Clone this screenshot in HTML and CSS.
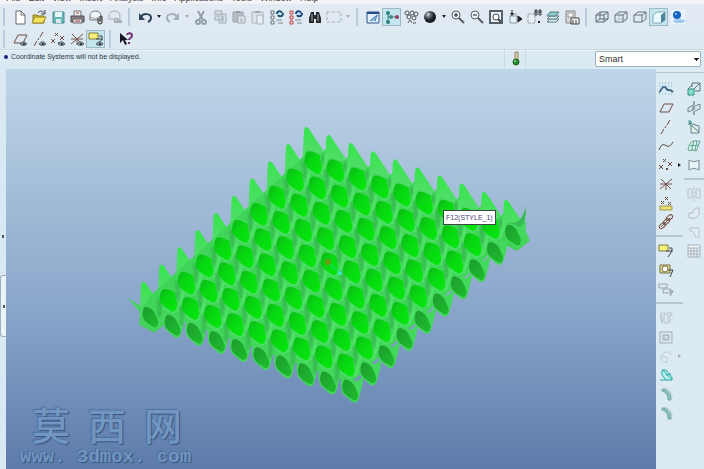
FILE: index.html
```html
<!DOCTYPE html>
<html lang="en">
<head>
<meta charset="utf-8">
<title>Surface model</title>
<link rel="stylesheet" href="styles.css">
</head>
<body>
<svg class="sprite" aria-hidden="true">
  <symbol id="new" viewBox="0 0 16 16"><path d="M4 2h5l4 4v9H4z" fill="#fff" stroke="#626b70"/><path d="M9 2v4h4" fill="none" stroke="#626b70"/></symbol>
  <symbol id="open" viewBox="0 0 16 16"><path d="M2 6h4l1 1h6v7H2z" fill="#d2b72c" stroke="#8a7a28"/><path d="M1 14l3-6h11l-3 6z" fill="#f3e25a" stroke="#9b8a2c"/><path d="M7 4c2-3 5-2 6 0M14 1v4h-4" fill="none" stroke="#34424a"/></symbol>
  <symbol id="save" viewBox="0 0 16 16"><path d="M3 3h11v11H3z" fill="#63b8b5" stroke="#4c8891"/><path d="M5 3h7v5H5z" fill="#e9f6f8"/><path d="M6 10h5v4H6z" fill="#d8e8ee"/></symbol>
  <symbol id="print" viewBox="0 0 16 16"><path d="M5 7V2h7v5" fill="#eee" stroke="#777"/><path d="M2 7h13v6H2z" fill="#8b7c80" stroke="#4f4b52"/><path d="M4 10h9v4H4z" fill="#e3dfe0" stroke="#666"/><path d="M7 4h3M6 12h5" stroke="#b13b41"/></symbol>
  <symbol id="mail" viewBox="0 0 16 16"><path d="M2 7c0-4 3-5 6-5s5 2 5 5v4H2z" fill="#f2f5f7" stroke="#777"/><path d="M2 8l5 2 6-3" fill="none" stroke="#999"/><path d="M10 9v4a2 2 0 0 0 4 0V8a1 1 0 0 0-2 0v5" fill="none" stroke="#222"/></symbol>
  <symbol id="send" viewBox="0 0 16 16"><path d="M2 7c0-4 3-5 6-5s5 2 5 5v3H2z" fill="#e2e8ed" stroke="#a5afb8"/><path d="M7 11h8v3H7z" fill="#a5afb8"/><circle cx="9" cy="11" r="2" fill="#c8d0d7" stroke="#9ba6af"/></symbol>
  <symbol id="undo" viewBox="0 0 16 16"><path d="M4 8c2-4 10-4 10 1 0 2-1 3-3 4" fill="none" stroke="#2e4258" stroke-width="2"/><path d="M2 4v7h6z" fill="#2e4258"/></symbol>
  <symbol id="redo" viewBox="0 0 16 16"><path d="M12 8c-2-4-10-4-10 1 0 2 1 3 3 4" fill="none" stroke="#a3afb9" stroke-width="2"/><path d="M14 4v7H8z" fill="#a3afb9"/></symbol>
  <symbol id="cut" viewBox="0 0 16 16"><path d="M5 2l5 9M11 2l-5 9" stroke="#96a0a9" stroke-width="2"/><g fill="none" stroke="#96a0a9" stroke-width="2"><circle cx="5" cy="13" r="2"/><circle cx="11" cy="13" r="2"/></g></symbol>
  <symbol id="copy" viewBox="0 0 16 16"><path d="M3 2h7v9H3zM7 5h7v9H7z" fill="#dce5eb" stroke="#9da9b2"/><path d="M9 8h3M9 10h3M9 12h3M4 5h2M4 7h2" stroke="#9da9b2"/></symbol>
  <symbol id="paste" viewBox="0 0 16 16"><path d="M2 3h10v10H2z" fill="#b5bec5" stroke="#97a3ab"/><path d="M5 2h4v2H5z" fill="#8f9ba4"/><path d="M7 7h7v7H7z" fill="#e3eaef" stroke="#9da9b2"/><path d="M9 10h3M9 12h3" stroke="#9da9b2"/></symbol>
  <symbol id="special" viewBox="0 0 16 16"><path d="M2 3h11v11H2z" fill="#dce5eb" stroke="#aab5bd"/><path d="M5 2h5v2H5z" fill="#9ba6af"/><path d="M7 6h6v9H7z" fill="#e9eff3" stroke="#aab5bd"/></symbol>
  <symbol id="regen" viewBox="0 0 16 16"><path d="M2 2h3v3H2zM2 7h3v3H2zM2 12h3v3H2z" fill="#fff" stroke="#5c6c75"/><path d="M8 5c0-3 4-4 5-1M14 4c0 4-4 4-5 2" fill="none" stroke="#1c5379" stroke-width="2"/><path d="M7 11h6M9 14h5" stroke="#7c8a92"/></symbol>
  <symbol id="regen2" viewBox="0 0 16 16"><path d="M2 2h3v3H2zM2 7h3v3H2zM2 12h3v3H2z" fill="#fbd7d9" stroke="#b44950"/><path d="M8 5c0-3 4-4 5-1M14 4c0 4-4 4-5 2" fill="none" stroke="#1c4c85" stroke-width="2"/><path d="M7 11h6M9 14h5" stroke="#7c8a92"/></symbol>
  <symbol id="find" viewBox="0 0 16 16"><path d="M4 3h3v3h2V3h3l2 6v5H9v-4H7v4H2V9z" fill="#26292c"/><path d="M5 5v7M11 5v7" stroke="#a9b2b5"/></symbol>
  <symbol id="select" viewBox="0 0 16 16"><path d="M1 3h14v10H1z" fill="none" stroke="#a4afb5" stroke-dasharray="3 2"/></symbol>
  <symbol id="sketch" viewBox="0 0 16 16"><path d="M2 3h12v11H2z" fill="#e0effa" stroke="#2a548a"/><path d="M2 3h12v2H2z" fill="#284f84"/><path d="M5 12l7-6-2 6" fill="#8ebde0" stroke="#3c76ac"/></symbol>
  <symbol id="tree" viewBox="0 0 16 16"><path d="M4 4v9M4 8h8" stroke="#467c80"/><g fill="#268079"><circle cx="4" cy="4" r="2"/><circle cx="4" cy="13" r="2"/></g><circle cx="7" cy="8" r="2" fill="#408e82"/><circle cx="13" cy="8" r="2" fill="#963d5e"/></symbol>
  <symbol id="chain" viewBox="0 0 16 16"><g fill="#eef2f4" stroke="#4c555b"><circle cx="4" cy="4" r="2"/><circle cx="9" cy="4" r="2"/><circle cx="13" cy="5" r="2"/><circle cx="6" cy="8" r="2"/><circle cx="11" cy="9" r="2"/><path d="M5 14l2-3 2 3M10 14h3"/></g></symbol>
  <symbol id="ball" viewBox="0 0 16 16"><circle cx="8" cy="8" r="6" fill="url(#ballFill)"/></symbol>
  <symbol id="zin" viewBox="0 0 16 16"><circle cx="6" cy="6" r="4" fill="#edf4f8" stroke="#555f66"/><path d="M9 9l5 5" stroke="#555f66" stroke-width="2"/><path d="M4 6h4M6 4v4" stroke="#222"/></symbol>
  <symbol id="zout" viewBox="0 0 16 16"><circle cx="6" cy="6" r="4" fill="#edf4f8" stroke="#555f66"/><path d="M9 9l5 5" stroke="#555f66" stroke-width="2"/><path d="M4 6h4" stroke="#222"/></symbol>
  <symbol id="refit" viewBox="0 0 16 16"><path d="M2 2h12v12H2z" fill="#e5eef3" stroke="#54616b" stroke-width="2"/><circle cx="8" cy="8" r="3" fill="#fff" stroke="#444"/><path d="M10 10l3 3" stroke="#444" stroke-width="2"/></symbol>
  <symbol id="orient" viewBox="0 0 16 16"><path d="M3 7h7v7H3zM3 7l2-2h5" fill="#e8f1f5" stroke="#879ba4"/><path d="M5 1v5M11 7l4 3-4 3z" fill="#222" stroke="#222"/><path d="M3 4h4L5 7z" fill="#222"/></symbol>
  <symbol id="views" viewBox="0 0 16 16"><path d="M2 5h7v9H2z" fill="#e9f1f5" stroke="#8fa0a8" stroke-dasharray="3 1"/><path d="M9 1h2v2H9zM9 3h2v3H9zM13 1h2v2h-2zM13 3h2v3h-2z" fill="none" stroke="#343a3e"/><path d="M12 13h2" stroke="#222" stroke-width="2"/></symbol>
  <symbol id="layers" viewBox="0 0 16 16"><g fill="#e0f2f4" stroke="#567a82"><path d="M2 13l3-3h9l-3 3z"/><path d="M2 10l3-3h9l-3 3z"/><path d="M2 7l3-4h9l-3 4z" fill="#8ed0ce"/></g></symbol>
  <symbol id="manager" viewBox="0 0 16 16"><path d="M2 2h9v12H2z" fill="#d8d9d9" stroke="#888"/><path d="M4 4h5v4H4z" fill="#fff" stroke="#999"/><path d="M7 9h8v6H7z" fill="#f5f5f5" stroke="#444"/><path d="M9 11v4M12 11v4" stroke="#444"/></symbol>
  <symbol id="wire" viewBox="0 0 16 16"><path d="M2 6h8v7H2zM6 3h8v7H6zM2 6l4-3M10 6l4-3M10 13l4-3M2 13l4-3" fill="none" stroke="#5d6c74"/></symbol>
  <symbol id="hidden" viewBox="0 0 16 16"><path d="M6 3v7h8M2 13l4-3" fill="none" stroke="#afbdc4"/><path d="M2 6h8v7H2zM2 6l4-3h8v7l-4 3M10 6l4-3" fill="none" stroke="#66757d"/></symbol>
  <symbol id="nohid" viewBox="0 0 16 16"><path d="M2 6h8v7H2zM2 6l4-3h8v7l-4 3M10 6l4-3" fill="none" stroke="#66757d"/></symbol>
  <symbol id="shade" viewBox="0 0 16 16"><path d="M2 6l4-3h8v8l-4 3H2z" fill="#eafaff" stroke="#87a9bb"/><path d="M10 6l4-3v8l-4 3z" fill="#4c8399"/></symbol>
  <symbol id="globe" viewBox="0 0 16 16"><path d="M1 1h14v14H1z" fill="#e9f4fc"/><ellipse cx="9" cy="12" rx="6" ry="2" fill="#a1c9ee"/><circle cx="7" cy="6" r="4" fill="#1666c7"/><circle cx="6" cy="5" r="1" fill="#a5d4ff"/></symbol>
  <symbol id="eye" viewBox="0 0 16 16"><path d="M8 13c2-3 5-3 7 0-2 2-5 2-7 0z" fill="#83949b" stroke="#59676e"/><circle cx="12" cy="13" r="1" fill="#222"/></symbol>
  <symbol id="plane" viewBox="0 0 16 16"><path d="M2 12l4-8h9l-4 8z" fill="none" stroke="#6f4d43"/></symbol>
  <symbol id="axis" viewBox="0 0 16 16"><path d="M3 15l3-5M7 9l1-2M9 6l3-5" stroke="#654a40"/></symbol>
  <symbol id="points" viewBox="0 0 16 16"><path d="M5 2l3 3M8 2L5 5M1 8l4 4M5 8l-4 4M10 5l4 4M14 5l-4 4M8 11l2 2M10 11l-2 2" stroke="#6e4c45"/></symbol>
  <symbol id="csys" viewBox="0 0 16 16"><path d="M8 8L3 3M8 8l6-5M8 8l-6 5M8 8l5 5M8 8H2M8 8h6M8 8v6" stroke="#735147"/></symbol>
  <symbol id="note" viewBox="0 0 16 16"><path d="M1 2h9v6H1z" fill="#f7ef78" stroke="#817e3d"/><path d="M8 8h6l-4 6M11 5h3v4" fill="none" stroke="#3c4546"/></symbol>
  <symbol id="help" viewBox="0 0 16 16"><path d="M2 2v10l3-3 2 5 2-1-2-4h3z" fill="#151522"/><path d="M9 4c1-3 5-2 5 1 0 2-3 2-3 4M11 11v2" fill="none" stroke="#743076" stroke-width="2"/></symbol>
  <symbol id="wave" viewBox="0 0 16 16"><path d="M1 2h14M1 5h14M1 13h14" stroke="#6eb3ce" stroke-dasharray="1 2"/><path d="M1 11c2 0 2-5 5-5s2 3 4 3 2-1 5 2" fill="none" stroke="#426b8a" stroke-width="2"/></symbol>
  <symbol id="curve" viewBox="0 0 16 16"><path d="M1 12c3-8 5-5 8-4s4-1 6-4" fill="none" stroke="#5f4d47"/></symbol>
  <symbol id="field" viewBox="0 0 16 16"><path d="M2 11h12v4H2z" fill="#e9df70" stroke="#9e9850"/><path d="M7 2l3 3M10 2L7 5M3 6l3 3M6 6L3 9M10 7l3 3M13 7l-3 3" stroke="#6e503e"/></symbol>
  <symbol id="link" viewBox="0 0 16 16"><g fill="none" stroke="#795542"><rect x="8" y="2" width="7" height="4" rx="2" transform="rotate(-40 11 4)"/><rect x="5" y="6" width="7" height="4" rx="2" transform="rotate(-40 8 8)"/><rect x="1" y="10" width="7" height="4" rx="2" transform="rotate(-40 4 12)"/></g><path d="M3 13l9-9" stroke="#795542"/></symbol>
  <symbol id="notegear" viewBox="0 0 16 16"><path d="M2 3h10v8H2z" fill="#eee283" stroke="#696d50"/><circle cx="7" cy="7" r="3" fill="#fff" stroke="#7c7247"/><path d="M10 8h5l-3 7" fill="none" stroke="#38423f"/></symbol>
  <symbol id="notes" viewBox="0 0 16 16"><path d="M1 3h8v4H1zM5 8h8v4H5z" fill="#dee8ed" stroke="#98a6ae"/><path d="M11 10h4l-3 5" fill="none" stroke="#84949d"/></symbol>
  <symbol id="tee" viewBox="0 0 16 16"><path d="M2 3h5v2H6v8h4V5H9V3h5v2h-2v8M4 13V5H2z" fill="none" stroke="#b8c4cc"/></symbol>
  <symbol id="shell" viewBox="0 0 16 16"><path d="M2 3h12v11H2zM5 6h6v5H5z" fill="#dce6ec" stroke="#9daeb9"/><circle cx="8" cy="8" r="2" fill="none" stroke="#a9b8c1"/></symbol>
  <symbol id="faint" viewBox="0 0 16 16"><path d="M3 13V8l4-4h4l2 3M3 9h6v5H3" fill="none" stroke="#bdcad2"/></symbol>
  <symbol id="draft" viewBox="0 0 16 16"><path d="M2 13h12v-3L8 3H4v5l4 5M5 3l9 10M8 8l5-1" fill="#b7eee9" stroke="#24aaa5"/></symbol>
  <symbol id="round" viewBox="0 0 16 16"><path d="M4 3c5 0 9 4 9 11h-3c0-5-2-8-6-9z" fill="#86c8c0" stroke="#6fa3a1"/><path d="M4 3l3-1c4 2 7 5 7 9" fill="none" stroke="#b1c6c9"/></symbol>
  <symbol id="extrude" viewBox="0 0 16 16"><path d="M2 8h6v6H2z" fill="#87ddcb" stroke="#348f80"/><path d="M6 6V2h8v8h-5M2 8l4-4M8 8l6-6" fill="none" stroke="#52777a"/></symbol>
  <symbol id="revolve" viewBox="0 0 16 16"><path d="M8 1v14" stroke="#52616b" stroke-dasharray="4 1"/><path d="M7 5L2 8v4l5-2zM9 6l5-2v5l-5 2" fill="#d5e4e8" stroke="#708892"/></symbol>
  <symbol id="blend" viewBox="0 0 16 16"><path d="M3 3l3 2 7 2v7H5V7z" fill="#e4efed" stroke="#688180"/><path d="M2 2h3v3H2M5 6l8 7" fill="none" stroke="#3b9588"/></symbol>
  <symbol id="surface" viewBox="0 0 16 16"><path d="M2 12c1-5 2-8 6-9 3-1 4 1 6 0-2 4-2 7-4 10-3-2-5 0-8-1zM4 8c3-2 5 1 8-1M8 3c-1 3-2 6-2 9M11 3L9 12" fill="#e1f3ee" stroke="#59a28f"/></symbol>
  <symbol id="patch" viewBox="0 0 16 16"><path d="M3 3c4 2 6 2 10 0v10c-4-2-6-2-10 0z" fill="#eaf2f6" stroke="#788b95"/></symbol>
  <symbol id="mirror" viewBox="0 0 16 16"><path d="M8 1v14" stroke="#b1bfc8" stroke-dasharray="3 1"/><path d="M2 3h4v9H2zM10 3h4v9h-4z" fill="#dde7ed" stroke="#b8c6ce"/></symbol>
  <symbol id="merge" viewBox="0 0 16 16"><path d="M3 13V8h4c0-4 2-5 6-5v6l-3 4z" fill="#e4ecf2" stroke="#aebdc6"/></symbol>
  <symbol id="trim" viewBox="0 0 16 16"><path d="M4 4h9v9H9c0-4-1-6-5-6z" fill="#e5edf2" stroke="#b4c2ca"/></symbol>
  <symbol id="grid" viewBox="0 0 16 16"><path d="M2 2h12v12H2zM2 5h12M5 5v9M8 5v9M11 5v9M2 8h12M2 11h12" fill="#f2f6f9" stroke="#a2b1bb"/></symbol>
  <defs><radialGradient id="ballFill" cx=".35" cy=".3"><stop offset="0" stop-color="#dfe6ea"/><stop offset=".4" stop-color="#68747c"/><stop offset="1" stop-color="#171d22"/></radialGradient></defs>
</svg>

<header class="header">
  <nav class="menu"><a href="#">File</a><a href="#">Edit</a><a href="#">View</a><a href="#">Insert</a><a href="#">Analysis</a><a href="#">Info</a><a href="#">Applications</a><a href="#">Tools</a><a href="#">Window</a><a href="#">Help</a></nav>
  <div class="bar">
    <i class="sep"></i>
    <button aria-label="New"><svg><use href="#new"/></svg></button><button aria-label="Open"><svg><use href="#open"/></svg></button><button aria-label="Save"><svg><use href="#save"/></svg></button><button aria-label="Print"><svg><use href="#print"/></svg></button><button aria-label="Mail"><svg><use href="#mail"/></svg></button><button aria-label="Send link"><svg><use href="#send"/></svg></button>
    <i class="sep"></i>
    <button aria-label="Undo"><svg><use href="#undo"/></svg></button><button class="drop" aria-label="Undo list"></button><button aria-label="Redo"><svg><use href="#redo"/></svg></button><button class="drop off" aria-label="Redo list"></button><button aria-label="Cut"><svg><use href="#cut"/></svg></button><button aria-label="Copy"><svg><use href="#copy"/></svg></button><button aria-label="Paste"><svg><use href="#paste"/></svg></button><button aria-label="Paste special"><svg><use href="#special"/></svg></button><button aria-label="Regenerate"><svg><use href="#regen"/></svg></button><button aria-label="Regenerate manager"><svg><use href="#regen2"/></svg></button><button aria-label="Find"><svg><use href="#find"/></svg></button><button aria-label="Select"><svg><use href="#select"/></svg></button><button class="drop off" aria-label="Selection list"></button>
    <i class="sep"></i>
    <button aria-label="Repaint"><svg><use href="#sketch"/></svg></button><button class="on" aria-label="Spin center"><svg><use href="#tree"/></svg></button><button aria-label="Orient mode"><svg><use href="#chain"/></svg></button><button aria-label="Appearance"><svg><use href="#ball"/></svg></button><button class="drop" aria-label="Appearance list"></button><button aria-label="Zoom in"><svg><use href="#zin"/></svg></button><button aria-label="Zoom out"><svg><use href="#zout"/></svg></button><button aria-label="Refit"><svg><use href="#refit"/></svg></button><button aria-label="Reorient"><svg><use href="#orient"/></svg></button><button aria-label="Saved views"><svg><use href="#views"/></svg></button><button aria-label="Layers"><svg><use href="#layers"/></svg></button><button aria-label="View manager"><svg><use href="#manager"/></svg></button>
    <i class="sep"></i>
    <button aria-label="Wireframe"><svg><use href="#wire"/></svg></button><button aria-label="Hidden line"><svg><use href="#hidden"/></svg></button><button aria-label="No hidden"><svg><use href="#nohid"/></svg></button><button class="on" aria-label="Shading"><svg><use href="#shade"/></svg></button><button aria-label="Enhanced realism"><svg><use href="#globe"/></svg></button>
  </div>
  <div class="bar">
    <i class="sep"></i>
    <button aria-label="Show planes"><svg><use href="#plane"/><use href="#eye"/></svg></button><button aria-label="Show axes"><svg><use href="#axis"/><use href="#eye"/></svg></button><button aria-label="Show points"><svg><use href="#points"/><use href="#eye"/></svg></button><button aria-label="Show coordinate systems"><svg><use href="#csys"/><use href="#eye"/></svg></button><button class="on" aria-label="Show annotations"><svg><use href="#note"/><use href="#eye"/></svg></button>
    <i class="sep"></i>
    <button aria-label="Context help"><svg><use href="#help"/></svg></button>
  </div>
  <div class="status">
    <p class="message">Coordinate Systems will not be displayed.</p>
    <span class="light"><svg viewBox="0 0 10 16"><path d="M4 1h3v8H4z" fill="#d7cfa9" stroke="#948c67"/><circle cx="5" cy="11" r="3" fill="#258a2c" stroke="#175c20"/><circle cx="4" cy="10" r="1" fill="#8de084"/></svg></span>
    <label class="filter"><select aria-label="Selection filter"><option>Smart</option></select></label>
  </div>
</header>

<main class="work">
  <aside class="rail"><button aria-label="Expand navigator"></button><button class="handle" aria-label="Expand browser"></button></aside>
  <section class="canvas">
    <svg class="model" id="model" viewBox="6 69 650 400" preserveAspectRatio="xMidYMid meet" role="img" aria-label="Waved surface">
      <defs>
        <linearGradient id="fin" x1="0" y1="0" x2="0" y2="1"><stop offset="0" stop-color="#35e64b"/><stop offset=".5" stop-color="#52dc6a"/><stop offset="1" stop-color="#3fcc53"/></linearGradient>
        <linearGradient id="face" x1="0" y1="0" x2="1" y2="1"><stop offset="0" stop-color="#0cb517"/><stop offset=".4" stop-color="#08d612"/><stop offset="1" stop-color="#04e90b"/></linearGradient>
        <linearGradient id="rim" x1="0" y1="0" x2="1" y2="1"><stop offset="0" stop-color="#1e9c2f"/><stop offset="1" stop-color="#1dbd2c"/></linearGradient>
        <filter id="soft" x="-100%" y="-100%" width="300%" height="300%"><feGaussianBlur stdDeviation="1.5"/></filter>
      </defs>
    </svg>
    <output class="tip">F12(STYLE_1)</output>
    <div class="mark"><div class="mark-name" lang="zh"><span>莫</span><span>西</span><span>网</span></div><div class="mark-site">www. 3dmox. com</div></div>
  </section>
  <aside class="tools">
    <div class="col">
      <button aria-label="Style"><svg><use href="#wave"/></svg></button><button aria-label="Plane"><svg><use href="#plane"/></svg></button><button aria-label="Axis"><svg><use href="#axis"/></svg></button><button aria-label="Curve"><svg><use href="#curve"/></svg></button><button class="more" aria-label="Point"><svg><use href="#points"/></svg></button><button aria-label="Coordinate system"><svg><use href="#csys"/></svg></button><button aria-label="Field point"><svg><use href="#field"/></svg></button><button aria-label="Reference"><svg><use href="#link"/></svg></button>
      <hr>
      <button aria-label="Annotation"><svg><use href="#note"/></svg></button><button aria-label="Annotation feature"><svg><use href="#notegear"/></svg></button><button aria-label="Propagate"><svg><use href="#notes"/></svg></button>
      <hr>
      <button aria-label="Hole"><svg><use href="#tee"/></svg></button><button aria-label="Shell"><svg><use href="#shell"/></svg></button><button class="more off" aria-label="Rib"><svg><use href="#faint"/></svg></button><button aria-label="Draft"><svg><use href="#draft"/></svg></button><button aria-label="Round"><svg><use href="#round"/></svg></button><button aria-label="Chamfer"><svg><use href="#round"/></svg></button>
    </div>
    <div class="col">
      <button aria-label="Extrude"><svg><use href="#extrude"/></svg></button><button aria-label="Revolve"><svg><use href="#revolve"/></svg></button><button aria-label="Blend"><svg><use href="#blend"/></svg></button><button aria-label="Boundary surface"><svg><use href="#surface"/></svg></button><button aria-label="Patch"><svg><use href="#patch"/></svg></button>
      <hr>
      <button aria-label="Mirror"><svg><use href="#mirror"/></svg></button><button aria-label="Merge"><svg><use href="#merge"/></svg></button><button aria-label="Trim"><svg><use href="#trim"/></svg></button><button aria-label="Pattern"><svg><use href="#grid"/></svg></button>
    </div>
  </aside>
</main>
<script src="script.js"></script>
</body>
</html>
```
FILE: styles.css
```css
* { box-sizing: border-box; }
html, body { height: 100%; margin: 0; }
body {
  display: flex;
  flex-direction: column;
  overflow: hidden;
  background: #dce9f2;
  color: #2c3844;
  font-family: "Liberation Sans", Arial, sans-serif;
  font-size: 9px;
}
button { padding: 0; border: 0; background: none; font: inherit; color: inherit; }
.sprite { position: absolute; width: 0; height: 0; }

/* Menu and toolbars */
.header { flex: none; background: linear-gradient(#e3eaf2, #d9e9f2); }
.menu {
  display: flex;
  align-items: flex-end;
  gap: 8px;
  height: 4px;
  padding-left: 6px;
  overflow: hidden;
  background: #f1f3f6;
  line-height: 12px;
}
.menu a { color: #444; text-decoration: none; }
.bar { display: flex; align-items: center; height: 20px; }
.bar:nth-of-type(1) { height: 25px; }
.bar button {
  display: grid;
  place-items: center;
  flex: none;
  width: 19px;
  height: 18px;
}
.bar svg, .tools svg { width: 16px; height: 16px; }
.bar .on { border: 1px solid #9fb9c4; background: #c3e5ee; }
.sep { flex: none; width: 2px; height: 18px; margin: 0 5px 0 4px; background: #bccbdc; }
.sep:first-child { margin-left: 3px; }
.bar .drop { width: 9px; }
.drop::after {
  content: "";
  border: 2px solid transparent;
  border-top: 3px solid #222;
  border-bottom: 0;
}
.drop.off { opacity: .3; }

.status {
  display: flex;
  height: 20px;
  border-top: 1px solid #c9d8e1;
  box-shadow: inset 0 1px #edf4f8;
}
.message {
  flex: 1;
  display: flex;
  align-items: flex-start;
  margin: 0;
  padding: 1px 0 0 4px;
  font-size: 7px;
  line-height: 12px;
}
.message::before {
  content: "";
  width: 4px;
  height: 4px;
  margin: 4px 3px 0 0;
  border-radius: 50%;
  background: #17257a;
}
.light { width: 22px; padding: 1px 6px; border: solid #cbdae3; border-width: 0 1px; }
.light svg { width: 10px; height: 16px; }
.filter { width: 178px; padding: 1px 3px 2px 69px; }
.filter select {
  width: 106px;
  height: 16px;
  padding: 0 3px;
  border: 1px solid #9db3be;
  border-radius: 2px;
  appearance: none;
  background: linear-gradient(#222, #222) 98px 6px / 5px 1px no-repeat,
    linear-gradient(#222, #222) 99px 7px / 3px 1px no-repeat,
    linear-gradient(#222, #222) 100px 8px / 1px 1px no-repeat, #fff;
  color: #333;
  font: 9px/14px "Liberation Sans", sans-serif;
}

/* Work area */
.work { flex: 1; display: flex; min-height: 0; }
.rail { display: flex; flex-direction: column; flex: none; width: 6px; padding-top: 128px; background: #d9e9f3; }
.rail button { display: grid; place-items: center; width: 6px; height: 78px; }
.rail button::after { content: ""; width: 2px; height: 3px; background: #485761; }
.rail .handle { height: 62px; border: 1px solid #9eb1bd; border-right: 0; border-radius: 3px 0 0 3px; background: #e9f3f8; }
.canvas {
  position: relative;
  flex: 1;
  min-width: 0;
  background: linear-gradient(#bfd5e9, #a9c2db 25%, #8ba7cb 58%, #5d7bab);
}
.model { display: block; width: 100%; height: 100%; }
.tip {
  position: absolute;
  left: 437px;
  top: 141px;
  padding: 0 2px;
  border: 1px solid #3c4a42;
  background: #fff;
  color: #444078;
  font-size: 7px;
  line-height: 13px;
  white-space: nowrap;
}
.mark {
  position: absolute;
  left: 14px;
  bottom: 2px;
  color: #7196c1;
  text-shadow: 1px 1px 1px #36547f, -1px -1px 1px #4f719f;
}
.mark-name { display: flex; gap: 18px; padding-left: 12px; font: 500 38px/46px "Noto Sans CJK SC", sans-serif; }
.mark-site { font: bold 19px/20px "Liberation Mono", monospace; white-space: pre; }

/* Feature tools */
.tools { display: flex; flex: none; gap: 9px; width: 48px; overflow: hidden; padding-top: 9px; background: linear-gradient(#b4c4cc, #b4c4cc) 0 3px / 100% 1px no-repeat, #dceaf3; }
.col { display: flex; flex-direction: column; flex: none; width: 19px; padding-top: 1px; }
.col button { position: relative; display: grid; place-items: center; height: 19px; }
.col hr { width: 27px; height: 2px; margin: 4px 0; border: 0; background: #b9c8d0; }
.more::after {
  content: "";
  position: absolute;
  left: 22px;
  top: 8px;
  border: 2px solid transparent;
  border-left: 3px solid #222;
  border-right: 0;
}
.more.off::after { opacity: .3; }
```
FILE: script.js
```js
// The surface is a 10 by 10 lattice of waves, drawn from back to front.
const NS = "http://www.w3.org/2000/svg";
const model = document.getElementById("model");
const COUNT = 10;

function add(parent, tag, attrs) {
  const node = document.createElementNS(NS, tag);
  for (const key in attrs) node.setAttribute(key, attrs[key]);
  parent.appendChild(node);
  return node;
}

function cell(row, col) {
  return [313 - 18.1 * row + 22.2 * col, 162 + 17.2 * row + 8.1 * col];
}

function at(row, col) {
  const [x, y] = cell(row, col);
  return add(model, "g", { transform: `translate(${x} ${y})` });
}

function eachCell(draw) {
  for (let row = 0; row < COUNT; row++) {
    for (let col = 0; col < COUNT; col++) draw(row, col);
  }
}

const FIN = "M-11 8L-9-31Q-8-38-4-33L10-12L17 6L4 16Z";
for (let col = COUNT - 1; col >= 0; col--) add(at(0, col), "path", { d: FIN, fill: "url(#fin)" });
for (let row = 1; row < COUNT; row++) add(at(row, 0), "path", { d: FIN, fill: "url(#fin)" });
add(model, "path", { d: "M128 298L142 307L152 296L154 308L144 316Q137 309 128 298Z", fill: "#42d75a" });
add(model, "path", { d: "M526 206Q526 222 522 229L519 238L508 235L510 222Q521 226 526 206Z", fill: "#37bd50" });
add(model, "path", { d: "M305 155L508 229L509 236L352 382L342 380L148 308L148 298Z", fill: "#40d559" });

const BODY = "M-9-8Q-7-14-3-12L7-8L14-14L12-3L9 8Q7 15 2 12L-7 4Q-9 0-9-8Z";
const FACE = "M-8-5C-7-12-3-11 0-10L5-8C8-7 7-4 8 1C10 6 8 13 4 12C0 10-4 7-7 4C-9 1-9-2-8-5Z";
const RIM = "M-7-7C-6-12-2-10 1-8C5-5 6 0 8 4C9 9 6 12 3 10C0 8-4 6-6 3C-8 0-8-4-7-7Z";
eachCell((row, col) => add(at(row, col), "path", { d: BODY, fill: "#42d85b" }));
eachCell((row, col) => {
  if (col === COUNT - 1) return;
  const group = at(row, col);
  const shadow = row ? "M8-18L10-11L9 0" : "M10-8L10-5L9 1";
  add(group, "path", { d: shadow, fill: "none", stroke: "#2f9a47", "stroke-width": 3, opacity: .65, filter: "url(#soft)" });
  if (row < COUNT - 1) {
    add(group, "path", { d: "M9 12L12 3L15-8", fill: "none", stroke: "#4fe068", "stroke-width": 3 });
    add(group, "path", { d: "M-5 8L3 13Q7 14 9 9", fill: "none", stroke: "#4ade63", "stroke-width": 2 });
  }
});
eachCell((row, col) => {
  const edge = row === COUNT - 1 || col === COUNT - 1;
  add(at(row, col), "path", { d: edge ? RIM : FACE, fill: edge ? "url(#rim)" : "url(#face)" });
});

// Spin centre
add(model, "path", { d: "M329 262l5 6M334 268l7 5", fill: "none", stroke: "#20d8a4" });
add(model, "circle", { cx: 328, cy: 262, r: 3, fill: "#6a9b12" });
add(model, "circle", { cx: 340, cy: 273, r: 2, fill: "#35e7c3" });
```
